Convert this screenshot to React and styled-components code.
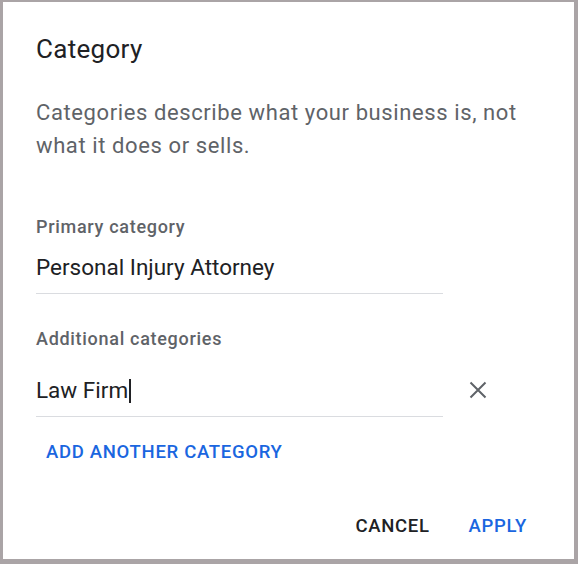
import React from "react";
import styled, { createGlobalStyle } from "styled-components";

const COLORS = {
  frame: "#aaa4a6",
  text: "#202124",
  muted: "#5f6368",
  line: "#dadce0",
  blue: "#1a66e0",
};

const GlobalStyle = createGlobalStyle`
  html, body {
    margin: 0;
    padding: 0;
    background: ${COLORS.frame};
  }
  * {
    box-sizing: border-box;
  }
`;

const Dialog = styled.div`
  width: 578px;
  height: 564px;
  display: flex;
  flex-direction: column;
  background: #fff;
  border-style: solid;
  border-color: ${COLORS.frame};
  border-width: 2px 4px 5px 3px;
  padding: 31px 24px 0 33px;
  font-family: Roboto, "Liberation Sans", Arial, sans-serif;
`;

const Title = styled.h2`
  margin: 0;
  font-size: 26px;
  font-weight: 400;
  line-height: 32px;
  letter-spacing: 0.3px;
  color: ${COLORS.text};
`;

const Description = styled.p`
  margin: 31px 0 0;
  font-size: 22px;
  line-height: 33px;
  letter-spacing: 0.6px;
  color: ${COLORS.muted};
`;

const Label = styled.div`
  margin-top: ${(props) => props.top}px;
  font-size: 18px;
  font-weight: 500;
  line-height: 24px;
  letter-spacing: 0.7px;
  color: ${COLORS.muted};
`;

const FieldRow = styled.div`
  display: flex;
  align-items: center;
  margin-top: ${(props) => props.top}px;
`;

const Field = styled.div`
  width: 407px;
  padding: 0 0 ${(props) => props.pad}px 0;
  border-bottom: 1px solid ${COLORS.line};
  font-size: 22.5px;
  line-height: 28px;
  color: ${COLORS.text};
  white-space: nowrap;
`;

const Caret = styled.span`
  display: inline-block;
  width: 1.5px;
  height: 24px;
  margin-left: 1px;
  vertical-align: -5px;
  background: ${COLORS.text};
`;

const ClearButton = styled.button`
  display: flex;
  align-items: center;
  justify-content: center;
  width: 24px;
  height: 24px;
  margin: 0 0 14px 23px;
  padding: 0;
  border: 0;
  background: none;
  color: ${COLORS.muted};
  cursor: pointer;
`;

const TextButton = styled.button`
  padding: 0;
  border: 0;
  background: none;
  font-family: inherit;
  font-size: 18.5px;
  font-weight: 500;
  line-height: 24px;
  letter-spacing: 0.7px;
  text-transform: uppercase;
  color: ${(props) => (props.primary ? COLORS.blue : COLORS.text)};
  cursor: pointer;
`;

const AddButton = styled(TextButton)`
  align-self: flex-start;
  margin: 23px 0 0 10px;
`;

const Actions = styled.div`
  display: flex;
  justify-content: flex-end;
  gap: 39px;
  margin: 50px 23px 0 0;
`;

function CloseIcon() {
  return (
    <svg width="18" height="18" viewBox="0 0 18 18" fill="none">
      <path
        d="M1.5 1.5 L16.5 16.5 M16.5 1.5 L1.5 16.5"
        stroke="currentColor"
        strokeWidth="2"
      />
    </svg>
  );
}

function App() {
  return (
    <>
      <GlobalStyle />
      <Dialog>
        <Title>Category</Title>
        <Description>
          Categories describe what your business is, not what it does or
          sells.
        </Description>

        <Label top={53}>Primary category</Label>
        <FieldRow top={14}>
          <Field pad={12}>Personal Injury Attorney</Field>
        </FieldRow>

        <Label top={33}>Additional categories</Label>
        <FieldRow top={25}>
          <Field pad={12}>
            Law Firm
            <Caret />
          </Field>
          <ClearButton aria-label="Remove">
            <CloseIcon />
          </ClearButton>
        </FieldRow>

        <AddButton primary>Add another category</AddButton>

        <Actions>
          <TextButton>Cancel</TextButton>
          <TextButton primary>Apply</TextButton>
        </Actions>
      </Dialog>
    </>
  );
}

export default App;
